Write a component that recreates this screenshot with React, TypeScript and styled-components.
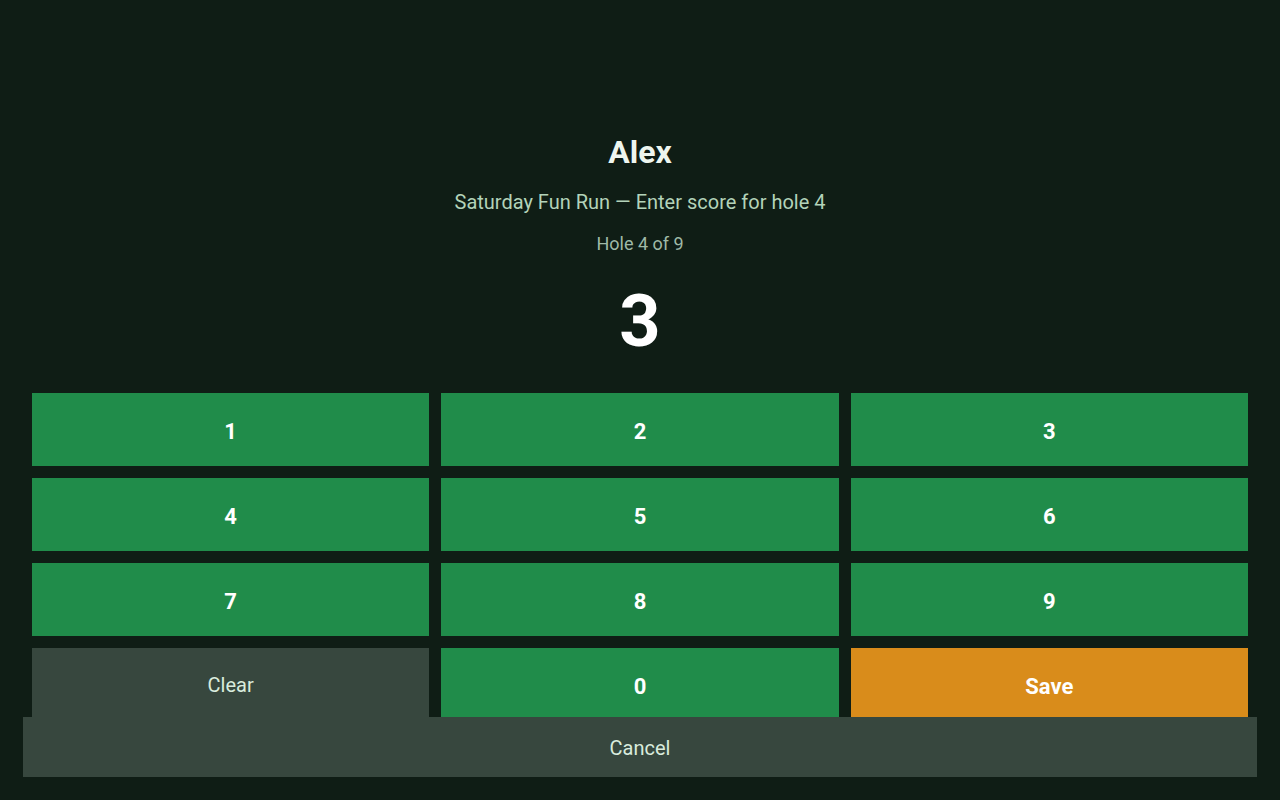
import styled, { createGlobalStyle } from "styled-components";

const GlobalStyle = createGlobalStyle`
    html, body {
        margin: 0;
        padding: 0;
        background-color: #0f1d15;
        font-family: Roboto, "Liberation Sans", sans-serif;
    }
    * {
        box-sizing: border-box;
    }
`;

const Screen = styled.main`
    display: flex;
    flex-direction: column;
    align-items: center;
    min-height: 100vh;
    padding: 133px 32px 0;
`;

const PlayerName = styled.h1`
    margin: 0;
    font-size: 32px;
    font-weight: 700;
    color: #eef6ef;
    line-height: normal;
`;

const Subtitle = styled.p`
    margin: 19px 0 0;
    font-size: 20px;
    color: #b3d3b9;
    line-height: normal;
`;

const HoleInfo = styled.p`
    margin: 19px 0 0;
    font-size: 18px;
    color: #9fb9a7;
    line-height: normal;
`;

const ScoreValue = styled.div`
    margin-top: 25px;
    font-size: 72px;
    font-weight: 700;
    color: #ffffff;
    line-height: normal;
`;

const Keypad = styled.div`
    margin-top: 29px;
    width: 100%;
    display: grid;
    grid-template-columns: repeat(3, 1fr);
    grid-auto-rows: 73px;
    gap: 12px;
`;

const KeyButton = styled.button<{ $variant?: "digit" | "muted" | "save" }>`
    border: none;
    border-radius: 0;
    padding: ${(p) => (p.$variant === "muted" ? "0" : "4px 0 0")};
    font-family: inherit;
    cursor: pointer;
    background-color: ${(p) =>
        p.$variant === "save" ? "#d98c1b" : p.$variant === "muted" ? "#37473e" : "#208c4a"};
    color: ${(p) => (p.$variant === "muted" ? "#d9ecdd" : "#ffffff")};
    font-size: ${(p) => (p.$variant === "muted" ? "20px" : "22px")};
    font-weight: ${(p) => (p.$variant === "muted" ? 400 : 700)};
`;

const CancelButton = styled.button`
    position: fixed;
    left: 23px;
    right: 23px;
    bottom: 23px;
    height: 60px;
    border: none;
    border-radius: 0;
    padding: 2px 0 0;
    background-color: #37473e;
    color: #d9ecdd;
    font-family: inherit;
    font-size: 20px;
    cursor: pointer;
`;

const digits = ["1", "2", "3", "4", "5", "6", "7", "8", "9"];

function App() {
    return (
        <>
            <GlobalStyle />
            <Screen>
                <PlayerName>Alex</PlayerName>
                <Subtitle>Saturday Fun Run — Enter score for hole 4</Subtitle>
                <HoleInfo>Hole 4 of 9</HoleInfo>
                <ScoreValue>3</ScoreValue>
                <Keypad>
                    {digits.map((d) => (
                        <KeyButton key={d}>{d}</KeyButton>
                    ))}
                    <KeyButton $variant="muted">Clear</KeyButton>
                    <KeyButton>0</KeyButton>
                    <KeyButton $variant="save">Save</KeyButton>
                </Keypad>
            </Screen>
            <CancelButton>Cancel</CancelButton>
        </>
    );
}

export default App;
